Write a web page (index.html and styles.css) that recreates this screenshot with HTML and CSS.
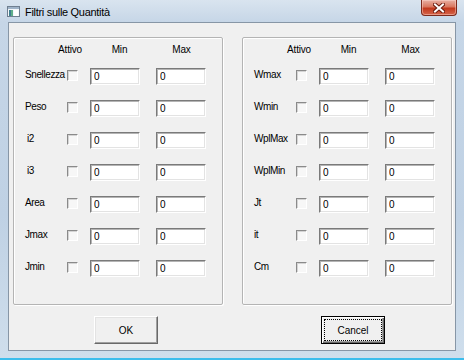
FILE: index.html
```html
<!DOCTYPE html>
<html lang="it">
<head>
    <meta charset="UTF-8">
    <title>Filtri sulle Quantità</title>
    <link rel="stylesheet" href="styles.css">
</head>
<body>
    <div class="window">
        <div class="titlebar">
            <svg class="app-icon" width="13" height="11" viewBox="0 0 13 11">
                <rect x="0.5" y="0.5" width="12" height="10" fill="#f4f7fa" stroke="#6f7f90"/>
                <rect x="1" y="1" width="11" height="2" fill="#9fb3c8"/>
                <rect x="2" y="4" width="2" height="6" fill="#3f7f8f"/>
                <rect x="4" y="4" width="2" height="6" fill="#5fae8a"/>
                <rect x="7" y="4" width="4" height="6" fill="#ffffff"/>
            </svg>
            <span class="title">Filtri sulle Quantità</span>
            <div class="close">
                <svg width="12" height="10" viewBox="0 0 12 10">
                    <path d="M2 1.5 L10 8.5 M10 1.5 L2 8.5" stroke="#6b1b0e" stroke-width="4" stroke-linecap="square"/>
                    <path d="M2 1.5 L10 8.5 M10 1.5 L2 8.5" stroke="#ffffff" stroke-width="2" stroke-linecap="square"/>
                </svg>
            </div>
        </div>

        <div class="client">
            <div class="groups">
                <div class="group">
                    <div class="heads">
                        <span class="h-attivo">Attivo</span>
                        <span class="h-min">Min</span>
                        <span class="h-max">Max</span>
                    </div>
                    <div class="rows">
                        <div class="row"><span class="lbl">Snellezza</span><input type="checkbox" class="chk"><input class="num" value="0"><input class="num" value="0"></div>
                        <div class="row"><span class="lbl">Peso</span><input type="checkbox" class="chk"><input class="num" value="0"><input class="num" value="0"></div>
                        <div class="row"><span class="lbl ind">i2</span><input type="checkbox" class="chk"><input class="num" value="0"><input class="num" value="0"></div>
                        <div class="row"><span class="lbl ind">i3</span><input type="checkbox" class="chk"><input class="num" value="0"><input class="num" value="0"></div>
                        <div class="row"><span class="lbl">Area</span><input type="checkbox" class="chk"><input class="num" value="0"><input class="num" value="0"></div>
                        <div class="row"><span class="lbl">Jmax</span><input type="checkbox" class="chk"><input class="num" value="0"><input class="num" value="0"></div>
                        <div class="row"><span class="lbl">Jmin</span><input type="checkbox" class="chk"><input class="num" value="0"><input class="num" value="0"></div>
                    </div>
                </div>

                <div class="group">
                    <div class="heads">
                        <span class="h-attivo">Attivo</span>
                        <span class="h-min">Min</span>
                        <span class="h-max">Max</span>
                    </div>
                    <div class="rows">
                        <div class="row"><span class="lbl">Wmax</span><input type="checkbox" class="chk"><input class="num" value="0"><input class="num" value="0"></div>
                        <div class="row"><span class="lbl">Wmin</span><input type="checkbox" class="chk"><input class="num" value="0"><input class="num" value="0"></div>
                        <div class="row"><span class="lbl">WplMax</span><input type="checkbox" class="chk"><input class="num" value="0"><input class="num" value="0"></div>
                        <div class="row"><span class="lbl">WplMin</span><input type="checkbox" class="chk"><input class="num" value="0"><input class="num" value="0"></div>
                        <div class="row"><span class="lbl">Jt</span><input type="checkbox" class="chk"><input class="num" value="0"><input class="num" value="0"></div>
                        <div class="row"><span class="lbl">it</span><input type="checkbox" class="chk"><input class="num" value="0"><input class="num" value="0"></div>
                        <div class="row"><span class="lbl">Cm</span><input type="checkbox" class="chk"><input class="num" value="0"><input class="num" value="0"></div>
                    </div>
                </div>
            </div>

            <div class="buttons">
                <button class="btn">OK</button>
                <button class="btn default"><span class="focus">Cancel</span></button>
            </div>
        </div>
    </div>
</body>
</html>
```

FILE: styles.css
```css
* { box-sizing: border-box; }
body { margin: 0; width: 464px; height: 360px; overflow: hidden; font-family: "Liberation Sans", Arial, sans-serif; font-size: 10px; color: #000; }

.window { width: 464px; height: 360px; display: flex; flex-direction: column; padding: 0 8px 7px 8px; background: linear-gradient(to bottom, #d9e4ef 0px, #c6d6e7 22px, #bfd1e4 60%, #cfdeec 100%); border-bottom: 2px solid #3cbdec; }

.titlebar { height: 22px; display: flex; align-items: flex-start; }
.app-icon { margin-top: 6px; margin-left: -1px; flex: none; }
.title { font-size: 11px; line-height: 14px; margin-top: 5px; margin-left: 5px; letter-spacing: -0.3px; color: #000; }
.close { margin-left: auto; margin-right: -1px; width: 36px; height: 16px; border: 1px solid #7c2a1c; border-top: none; border-radius: 0 0 4px 4px; background: linear-gradient(to bottom, #e8b0a3 0%, #d9775f 45%, #c2391d 55%, #d5654a 100%); box-shadow: inset 0 0 0 1px rgba(255,220,210,0.45); display: flex; align-items: center; justify-content: center; }

.client { flex: 1; background: #f0f0f0; border: 1px solid #8796a6; padding: 14px 0 0 4px; }

.groups { display: flex; gap: 19px; }
.group { width: 210px; border: 1px solid #b4b4b4; border-radius: 2px; box-shadow: 1px 1px 0 #fff, inset 1px 1px 0 #fff; padding: 5px 0 27px 0; }

.heads { display: flex; height: 13px; line-height: 13px; padding-left: 40px; }
.heads span { text-align: center; letter-spacing: -0.2px; }
.h-attivo { width: 32px; }
.h-min { width: 51px; margin-left: 8px; }
.h-max { width: 51px; margin-left: 11px; }

.rows { display: flex; flex-direction: column; gap: 15px; margin-top: 12px; padding-left: 11px; }
.row { display: flex; height: 17px; }
.lbl { width: 43px; line-height: 13px; letter-spacing: -0.4px; white-space: nowrap; }
.lbl.ind { padding-left: 2px; }

.chk { -webkit-appearance: none; appearance: none; margin: 2px 12px 0 0; width: 11px; height: 11px; border: 1px solid; border-color: #8a8a8a #fff #fff #8a8a8a; background: #f7f7f7; box-shadow: inset 1px 1px 0 #d4d4d4; flex: none; }

.num { width: 50px; height: 17px; margin: 0 16px 0 0; padding: 0 0 0 3px; font-family: inherit; font-size: 10px; line-height: 15px; color: #000; background: #fff; border: 1px solid; border-color: #7a7a7a #fff #fff #7a7a7a; box-shadow: inset 1px 1px 0 #b4b4b4, inset -1px -1px 0 #e3e3e3; outline: none; }

.buttons { display: flex; margin-top: 11px; padding-left: 81px; gap: 163px; }
.btn { width: 64px; height: 28px; padding: 0; font-family: inherit; font-size: 10px; color: #000; background: #f0f0f0; border: 1px solid; border-color: #fff #696969 #696969 #fff; box-shadow: inset -1px -1px 0 #a0a0a0, inset 1px 1px 0 #e3e3e3; }
.btn.default { border-color: #000; box-shadow: inset 1px 1px 0 #fff, inset -1px -1px 0 #696969, inset -2px -2px 0 #a0a0a0; padding: 2px; }
.focus { display: flex; align-items: center; justify-content: center; height: 100%; border: 1px dotted #000; }
```
